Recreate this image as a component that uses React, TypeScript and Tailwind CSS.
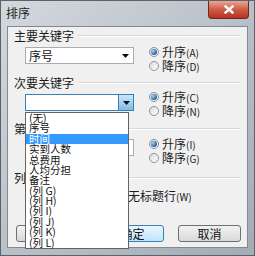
const Radio = ({ checked }: { checked?: boolean }) => (
  <span className="w-[10px] h-[10px] rounded-full border border-[#8e9296] bg-linear-to-br from-[#d8dadc] to-[#ffffff] flex items-center justify-center shrink-0">
    {checked && (
      <span className="w-[6px] h-[6px] rounded-full bg-[radial-gradient(circle_at_35%_35%,#a8d0f5,#1c5aa6_70%)]" />
    )}
  </span>
);

const RadioRow = ({ label, keyName, checked }: { label: string; keyName: string; checked?: boolean }) => (
  <div className="h-[14px] flex items-center gap-[3px]">
    <Radio checked={checked} />
    <span className="text-[12px] leading-none text-[#222]">
      {label}
      <span className="text-[10px]">({keyName})</span>
    </span>
  </div>
);

const GroupHeader = ({ title, className }: { title: string; className?: string }) => (
  <div className={`h-[12px] flex items-center pl-[6px] pr-[6px] ${className ?? ''}`}>
    <span className="text-[12px] leading-none text-[#1a1a1a] pr-[4px]">{title}</span>
    <div className="flex-1 border-t border-[#d5d9dd] border-b border-b-white" />
  </div>
);

const Combo = ({ value, active }: { value?: string; active?: boolean }) => (
  <div
    className={`w-[109px] h-[17px] border ${
      active ? 'border-[#3c7fb1]' : 'border-[#a9adb3]'
    } bg-white flex items-center justify-between`}
  >
    <span className="pl-[3px] text-[12px] leading-none text-[#111]">{value}</span>
    <span
      className={`h-full w-[15px] flex items-center justify-center ${
        active ? 'bg-linear-to-b from-[#c9e6fa] to-[#7fbde8] border-l border-[#3c7fb1]' : ''
      }`}
    >
      <svg width="7" height="4" viewBox="0 0 7 4">
        <path d="M0 0h7L3.5 4z" fill="#111" />
      </svg>
    </span>
  </div>
);

const items = [
  '(无)',
  '序号',
  '时间',
  '实到人数',
  '总费用',
  '人均分担',
  '备注',
  '(列 G)',
  '(列 H)',
  '(列 I)',
  '(列 J)',
  '(列 K)',
  '(列 L)',
];

export default function App() {
  return (
    <div className="w-[255px] h-[256px] bg-linear-to-br from-[#d3d8dd] via-[#b9c1c8] to-[#a3acb5] border border-[#59636c] flex flex-col font-['Noto_Sans_CJK_SC','Liberation_Sans',sans-serif] overflow-hidden">
      <div className="h-[25px] flex items-start justify-between shrink-0">
        <span className="pl-[5px] pt-[6px] text-[12px] leading-none text-[#1c1c1c]">排序</span>
        <div className="mr-[5px] w-[41px] h-[18px] rounded-b-[4px] border border-t-0 border-[#6a2a20] bg-linear-to-b from-[#e8a799] via-[#cf5a45] to-[#b8311c] flex items-center justify-center">
          <svg width="10" height="9" viewBox="0 0 10 9">
            <path d="M1.5 1.5l7 6M8.5 1.5l-7 6" stroke="#fff" strokeWidth="2.4" strokeLinecap="square" />
          </svg>
        </div>
      </div>

      <div className="mx-[6px] h-[222px] border border-[#7f8a94] bg-[#f0f0f0] relative shrink-0">
        <GroupHeader title="主要关键字" className="mt-[3px]" />
        <div className="flex mt-[3px]">
          <div className="ml-[17px] mt-[2px]">
            <Combo value="序号" />
          </div>
          <div className="ml-[15px] flex flex-col">
            <RadioRow label="升序" keyName="A" checked />
            <RadioRow label="降序" keyName="D" />
          </div>
        </div>

        <GroupHeader title="次要关键字" className="mt-[4px]" />
        <div className="flex mt-[1px]">
          <div className="ml-[17px] mt-[4px]">
            <Combo active />
          </div>
          <div className="ml-[15px] flex flex-col">
            <RadioRow label="升序" keyName="C" checked />
            <RadioRow label="降序" keyName="N" />
          </div>
        </div>

        <GroupHeader title="第三关键字" className="mt-[5px]" />
        <div className="flex mt-[2px]">
          <div className="ml-[17px] mt-[2px]">
            <Combo />
          </div>
          <div className="ml-[15px] flex flex-col">
            <RadioRow label="升序" keyName="I" checked />
            <RadioRow label="降序" keyName="G" />
          </div>
        </div>

        <GroupHeader title="列" className="mt-[7px]" />
        <div className="h-[14px] mt-[5px] flex items-center pl-[22px]">
          <div className="w-[85px] flex items-center gap-[3px]">
            <Radio checked />
            <span className="text-[12px] leading-none text-[#1a1a1a]">
              有标题行<span className="text-[10px]">(R)</span>
            </span>
          </div>
          <div className="flex items-center gap-[3px]">
            <Radio />
            <span className="text-[12px] leading-none text-[#1a1a1a]">
              无标题行<span className="text-[10px]">(W)</span>
            </span>
          </div>
        </div>

        <div className="mt-[22px] flex pl-[8px]">
          <button className="w-[75px] h-[17px] rounded-[3px] border border-[#707070] bg-linear-to-b from-[#f2f2f2] to-[#d9d9d9] text-[12px] leading-none text-[#111]">
            选项<span className="text-[10px]">(O)...</span>
          </button>
          <button className="ml-[10px] w-[63px] h-[17px] rounded-[3px] border border-[#3c7fb1] bg-linear-to-b from-[#eaf6fd] to-[#bee6fd] text-[12px] leading-none text-[#111]">
            确定
          </button>
          <button className="ml-[14px] w-[63px] h-[17px] rounded-[3px] border border-[#707070] bg-linear-to-b from-[#f2f2f2] to-[#d9d9d9] text-[12px] leading-none text-[#111]">
            取消
          </button>
        </div>

        <div className="absolute left-[17px] top-[85px] w-[104px] h-[137px] bg-white border border-[#646464] flex flex-col">
          {items.map((it) => (
            <div
              key={it}
              className={`h-[10.4px] pl-[3px] flex items-center text-[10.5px] leading-none ${
                it === '时间' ? 'bg-[#3399ff] text-white' : 'text-[#111]'
              }`}
            >
              {it}
            </div>
          ))}
        </div>
      </div>
    </div>
  );
}
